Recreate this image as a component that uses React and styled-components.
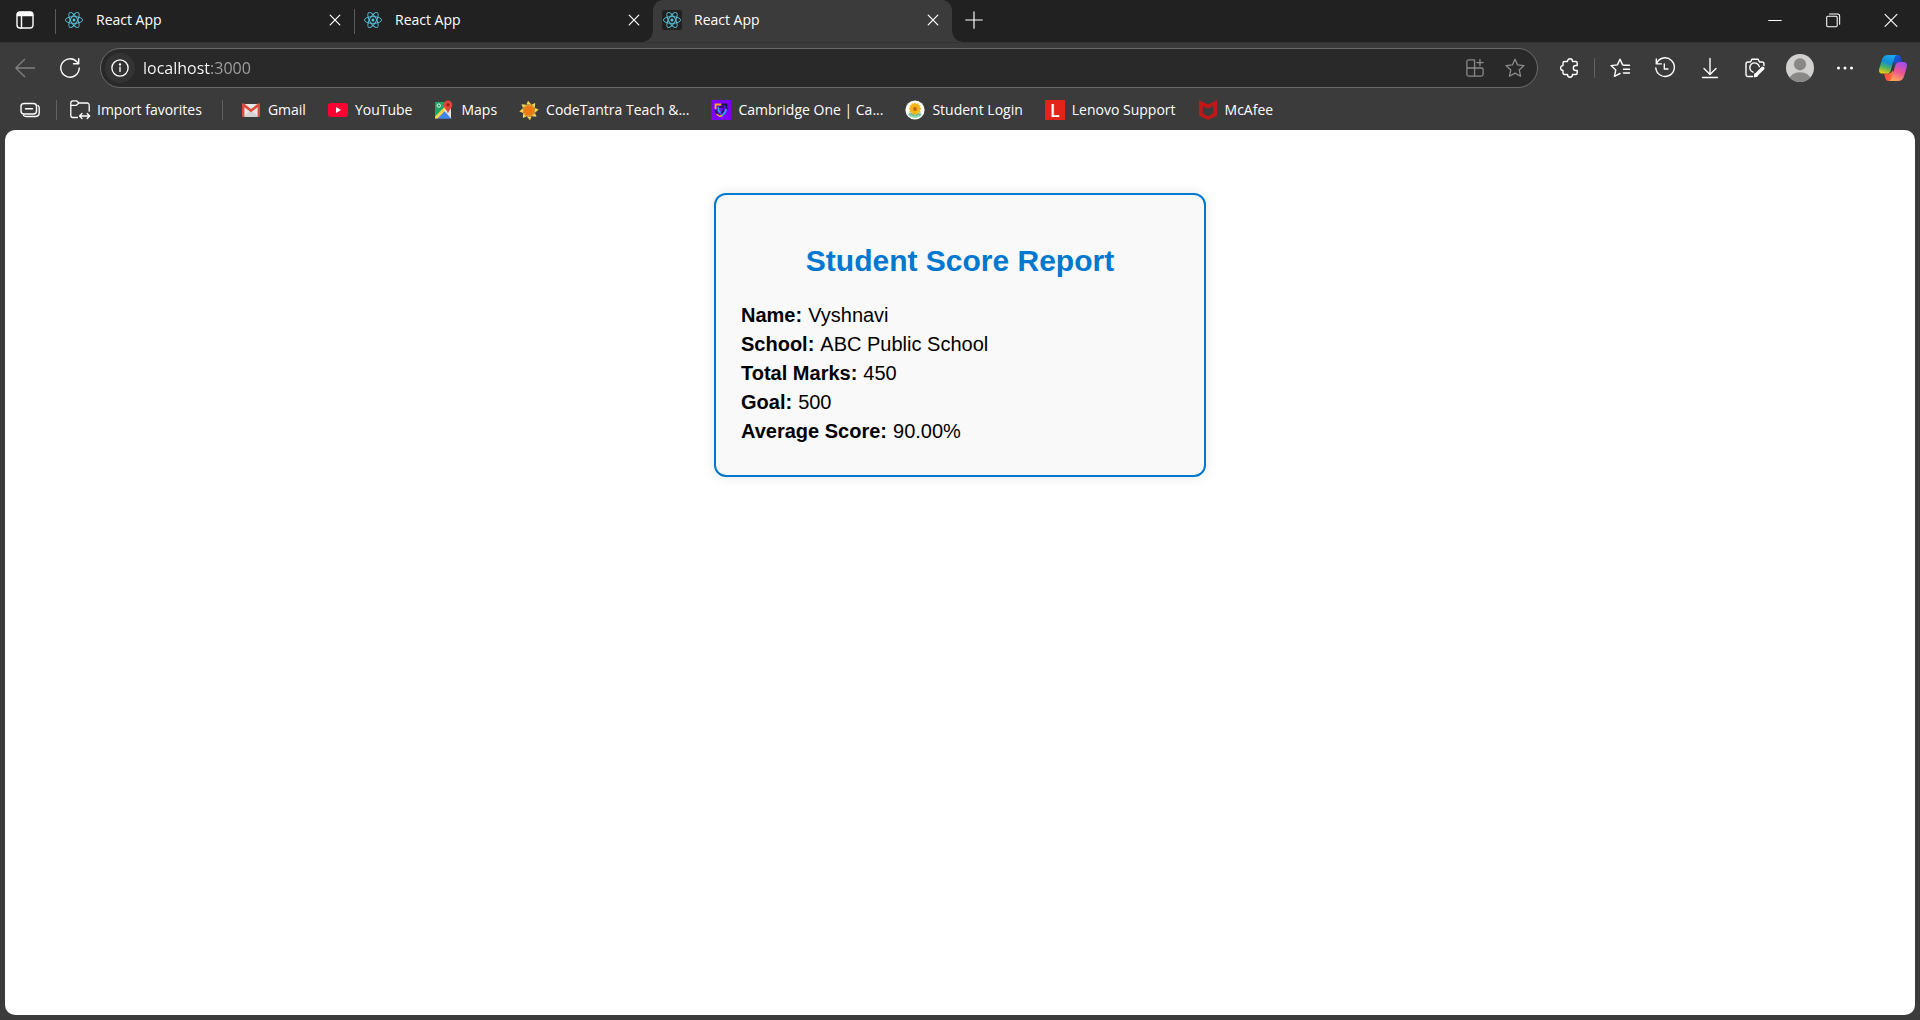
import React from "react";
import styled, { createGlobalStyle, css } from "styled-components";

const GlobalStyle = createGlobalStyle`
  *, *::before, *::after { box-sizing: border-box; }
  body { margin: 0; background: #3b3b3b; }
  button, input { font: inherit; color: inherit; }
`;

const uiFont = `"Open Sans", "Noto Sans", sans-serif`;

const Window = styled.div`
  display: flex;
  flex-direction: column;
  min-height: 100vh;
  background: #3b3b3b;
  color: #fff;
  font-family: ${uiFont};
  font-size: 14px;
  line-height: 20px;
`;

const bareButton = css`
  display: flex;
  align-items: center;
  justify-content: center;
  padding: 0;
  border: 0;
  background: none;
  color: inherit;
  flex: none;
`;

const Svg = styled.svg.attrs({ "aria-hidden": true })`
  display: block;
  flex: none;
  width: ${(p) => p.$size || 20}px;
  height: ${(p) => p.$size || 20}px;
  overflow: visible;
`;

function Line({ size, width = 1.3, children }) {
  return (
    <Svg $size={size} viewBox="0 0 20 20" fill="none" stroke="currentColor" strokeWidth={width} strokeLinecap="round" strokeLinejoin="round">
      {children}
    </Svg>
  );
}

/* ---------- Tab strip ---------- */

const TabStrip = styled.header`
  display: flex;
  height: 42px;
  background: #212121;
`;

const StripButton = styled.button`
  ${bareButton}
  width: ${(p) => p.$width}px;
  height: 40px;
`;

const TabList = styled.nav`
  display: flex;
  flex: 0 1 auto;
  margin-left: 5px;
`;

const Tab = styled.div`
  position: relative;
  display: flex;
  align-items: center;
  gap: 12px;
  width: 299px;
  height: 42px;
  padding: 0 8px 2px 9px;

  &::before {
    content: "";
    position: absolute;
    left: 0;
    top: 9px;
    width: 1px;
    height: 25px;
    background: #5c5c5c;
  }

  ${(p) =>
    p.$active &&
    css`
      background: #3b3b3b;
      border-radius: 10px 10px 0 0;

      &::before,
      &::after {
        content: "";
        position: absolute;
        top: auto;
        bottom: 0;
        width: 10px;
        height: 10px;
      }
      &::before {
        left: -10px;
        background: radial-gradient(circle at 0 0, transparent 9px, #3b3b3b 10px);
      }
      &::after {
        right: -10px;
        background: radial-gradient(circle at 100% 0, transparent 9px, #3b3b3b 10px);
      }
    `}
`;

const TabTitle = styled.span`
  flex: 1;
  overflow: hidden;
  white-space: nowrap;
  text-overflow: ellipsis;
`;

const TabClose = styled.button`
  ${bareButton}
  width: 22px;
  height: 22px;
`;

const Favicon = styled.span`
  display: flex;
  align-items: center;
  justify-content: center;
  width: 20px;
  height: 20px;
  border-radius: 2px;
  background: #212121;
`;

const WindowControls = styled.div`
  display: flex;
  margin-left: auto;
`;

function ReactLogo() {
  return (
    <Svg $size={20} viewBox="0 0 20 20" fill="none" stroke="#58c4dc" strokeWidth="0.9">
      {[0, 60, 120].map((angle) => (
        <ellipse key={angle} cx="10" cy="10" rx="8.6" ry="3.4" transform={`rotate(${angle} 10 10)`} />
      ))}
      <circle cx="10" cy="10" r="1.5" fill="#58c4dc" stroke="none" />
    </Svg>
  );
}

function CloseIcon({ size }) {
  return (
    <Line size={size} width={2}>
      <path d="M2 2 18 18M18 2 2 18" />
    </Line>
  );
}

function BrowserTab({ active }) {
  return (
    <Tab $active={active}>
      <Favicon><ReactLogo /></Favicon>
      <TabTitle>React App</TabTitle>
      <TabClose aria-label="Close tab"><CloseIcon size={12} /></TabClose>
    </Tab>
  );
}

/* ---------- Toolbar ---------- */

const Toolbar = styled.div`
  display: flex;
  align-items: center;
  gap: 1px;
  height: 52px;
  padding: 0 5px 0 3px;
  box-shadow: inset 0 1px #333;
`;

const ToolButton = styled.button`
  ${bareButton}
  width: 44px;
  height: 36px;
  color: ${(p) => (p.$dim ? "#818181" : "#fff")};
  margin-left: ${(p) => (p.$apart ? 3 : 0)}px;
`;

const ToolDivider = styled.span`
  width: 1px;
  height: 20px;
  margin: 0 2px 0 1px;
  background: #616161;
`;

const AddressBar = styled.div`
  display: flex;
  align-items: center;
  gap: 8px;
  flex: 1;
  min-width: 0;
  height: 40px;
  margin: 0 9px 0 7px;
  padding: 0 6px 0 4px;
  border: 1px solid #6b6b6b;
  border-radius: 20px;
  background: #292929;
`;

const SiteInfo = styled.button`
  ${bareButton}
  width: 30px;
  height: 30px;
  border-radius: 50%;
  background: #333;
`;

const AddressInput = styled.input`
  flex: 1;
  min-width: 0;
  height: 24px;
  padding: 0;
  border: 0;
  outline: 0;
  font-size: 16px;
  line-height: 24px;
  color: transparent;
  caret-color: #fff;
  background: linear-gradient(90deg, #fff 68px, #a3a3a3 68px);
  -webkit-background-clip: text;
  background-clip: text;
`;

const AddressAction = styled.button`
  ${bareButton}
  width: 32px;
  height: 30px;
  color: #8b8b8b;
`;

function Avatar() {
  return (
    <Svg $size={28} viewBox="0 0 28 28">
      <clipPath id="avatar-clip"><circle cx="14" cy="14" r="14" /></clipPath>
      <g clipPath="url(#avatar-clip)">
        <rect width="28" height="28" fill="#d2d0ce" />
        <circle cx="14" cy="10.3" r="6.1" fill="#8a8886" />
        <ellipse cx="14" cy="25.5" rx="10.5" ry="7.3" fill="#8a8886" />
      </g>
    </Svg>
  );
}

function CopilotLogo() {
  return (
    <Svg $size={28} viewBox="0 0 28 28">
      <defs>
        <linearGradient id="cp-left" x1="0.6" y1="0" x2="0.3" y2="1">
          <stop offset="0" stopColor="#1ba8ee" />
          <stop offset="0.4" stopColor="#0e8fd4" />
          <stop offset="0.7" stopColor="#55b45c" />
          <stop offset="1" stopColor="#f2cd12" />
        </linearGradient>
        <linearGradient id="cp-right" x1="0.7" y1="0" x2="0.3" y2="1">
          <stop offset="0" stopColor="#a34cf0" />
          <stop offset="0.5" stopColor="#ed5590" />
          <stop offset="1" stopColor="#ffab59" />
        </linearGradient>
        <linearGradient id="cp-top" x1="0" y1="0" x2="1" y2="1">
          <stop offset="0" stopColor="#1464dc" />
          <stop offset="1" stopColor="#1e3eb8" />
        </linearGradient>
        <linearGradient id="cp-bottom" x1="0" y1="0" x2="1" y2="0">
          <stop offset="0" stopColor="#f8443d" />
          <stop offset="1" stopColor="#ff7b3d" />
        </linearGradient>
      </defs>
      <path d="M14 1h4.600c2 0 2.900 1.100 3.500 3.200l1 3.800h-3.700c-2 0-3 .7-3.700 3L14 7z" fill="url(#cp-top)" />
      <path d="M14 27H9.600c-2 0-2.900-1.200-3.500-3.300L5 19.600h4.500c2 0 3-.7 3.700-3l2 3z" fill="url(#cp-bottom)" />
      <path d="M9 1h9c-1.500.3-2.200 1.500-2.800 3.500L12 15.500c-.9 3-2 4.100-4.500 4.100H3.400c-3 0-3.800-2.200-3.100-5.100L3 5.500C4 2.500 5.800 1 9 1z" fill="url(#cp-left)" />
      <path d="M19 27h-9c1.500-.3 2.300-1.500 2.800-3.500L16 12.300c.9-3 2-4.300 4.500-4.300h4c3 0 4 2.300 3.200 5.200L25 22.500C24 25.500 22.200 27 19 27z" fill="url(#cp-right)" />
    </Svg>
  );
}

const starPath = "M10 1.200 12.600 6.900 19 7.600 14.200 11.900 15.600 18.300 10 15.100 4.400 18.300 5.800 11.900 1 7.600 7.400 6.900Z";

/* ---------- Favorites bar ---------- */

const FavoritesBar = styled.nav`
  display: flex;
  align-items: center;
  height: 36px;
  padding: 0 8px 4px 20px;
`;

const BarButton = styled.button`
  ${bareButton}
  gap: 7px;
  white-space: nowrap;
`;

const BarDivider = styled.span`
  width: 1px;
  height: 20px;
  margin: 0 ${(p) => p.$after}px 0 ${(p) => p.$before}px;
  background: #616161;
`;

const FavoriteList = styled.div`
  display: flex;
  gap: 22px;
`;

const Favorite = styled.a`
  display: flex;
  align-items: center;
  gap: 7px;
  color: inherit;
  text-decoration: none;
  white-space: nowrap;
`;

const LenovoMark = styled.span`
  display: flex;
  align-items: center;
  justify-content: center;
  width: 20px;
  height: 20px;
  background: #e1251b;
  font: 600 18px/20px "Open Sans", sans-serif;
`;

function GmailIcon() {
  return (
    <Svg viewBox="0 0 20 20">
      <path d="M2 4h16v13H2z" fill="#e8e8e8" />
      <path d="M2 17 10 10l8 7z" fill="#d3d3d3" />
      <path d="M1 4.500C1 3.500 2 3 3 3.600L10 9l7-5.400c1-.6 2-.1 2 .9V17h-2.400V7.300L10 12.200 3.400 7.300V17H1z" fill="#dd4b3e" />
    </Svg>
  );
}

function YouTubeIcon() {
  return (
    <Svg viewBox="0 0 20 20">
      <rect y="3" width="20" height="14" rx="3" fill="#ff0033" />
      <path d="M8 7v6l5-3z" fill="#fff" />
    </Svg>
  );
}

function MapsIcon() {
  return (
    <Svg viewBox="0 0 20 20">
      <path d="M1 2h12v8L2 18.500H1z" fill="#22a464" />
      <path d="M2 18.500 10 10l8 8.500z" fill="#4285f4" />
      <path d="M1 16.500 11.500 6l2 2.500L3.500 18.500H1z" fill="#fbd34b" />
      <path d="M10 10.500 17 6v12.500z" fill="#e5e5e5" />
      <path d="M4.500 18.500 10 12.500l5.500 6z" fill="#4285f4" />
      <circle cx="4.800" cy="5.600" r="1.700" fill="none" stroke="#e8f5e9" strokeWidth="1" />
      <path d="M14 .5a4.300 4.300 0 0 1 4.300 4.300c0 3.200-3 4.700-4.300 8.700-1.300-4-4.300-5.500-4.300-8.700A4.300 4.300 0 0 1 14 .5z" fill="#e0443a" />
      <circle cx="14" cy="4.800" r="1.600" fill="#8c2119" />
    </Svg>
  );
}

function SunIcon() {
  return (
    <Svg viewBox="0 0 20 20">
      {[0, 45, 90, 135, 180, 225, 270, 315].map((a) => (
        <path key={a} d="M7.500 4.500 9 .8l3.500 3.900z" fill="#f4d35a" transform={`rotate(${a} 10 10.500)`} />
      ))}
      <circle cx="10" cy="10.500" r="6" fill="#e9b53a" />
      <circle cx="10" cy="10.500" r="5.300" fill="#ec7a14" />
    </Svg>
  );
}

function CambridgeIcon() {
  return (
    <Svg viewBox="0 0 20 20" fill="none">
      <rect width="20" height="20" fill="#8000ff" />
      <path d="M4.500 9V4.500H10" stroke="#ffb000" strokeWidth="1.800" />
      <path d="M11 4.500h4.500V10" stroke="#121a4a" strokeWidth="1.800" />
      <path d="M15 9c0 3.500-2 5.500-5 7" stroke="#17b4ea" strokeWidth="1.800" />
      <path d="M4.500 10c.3 2.600 2 4.800 5 6" stroke="#121a4a" strokeWidth="1.800" />
      <path d="M5.500 14 9 16.500l2-1" stroke="#ffb000" strokeWidth="1.500" />
      <path d="M7.500 7v3c0 1.200.8 2 2.500 3" stroke="#17b4ea" strokeWidth="1.600" />
      <path d="M8 7h4.500v3c0 1.200-.8 2-2.500 3" stroke="#121a4a" strokeWidth="1.500" />
    </Svg>
  );
}

function FlowerIcon() {
  return (
    <Svg viewBox="0 0 20 20">
      <circle cx="10" cy="10" r="9.600" fill="#fff" />
      <path d="M4.200 12.500h11.600l.8 2.700a9 9 0 0 1-13.200 0z" fill="#8ed4bb" />
      <path d="M5 15.500 7 13l1.500 2.500L10 13l1.500 2.500L13 13l2 2.500" fill="none" stroke="#35a584" strokeWidth=".8" />
      {[0, 30, 60, 90, 120, 150].map((a) => (
        <ellipse key={a} cx="10" cy="8.800" rx="6.300" ry="2.100" fill="#f5b51b" transform={`rotate(${a} 10 8.800)`} />
      ))}
      <circle cx="10" cy="9" r="1.900" fill="#b96a10" />
    </Svg>
  );
}

function McAfeeIcon() {
  return (
    <Svg viewBox="0 0 20 20">
      <path d="M1 .3 10 4.500 19 .3V15.500L10 20 1 15.500zM4.800 6v7.500L10 16.200l5.200-2.700V6L10 8.600z" fill="#c01818" fillRule="evenodd" />
    </Svg>
  );
}

const favorites = [
  ["Gmail", <GmailIcon />],
  ["YouTube", <YouTubeIcon />],
  ["Maps", <MapsIcon />],
  ["CodeTantra Teach &...", <SunIcon />],
  ["Cambridge One | Ca...", <CambridgeIcon />],
  ["Student Login", <FlowerIcon />],
  ["Lenovo Support", <LenovoMark aria-hidden="true">L</LenovoMark>],
  ["McAfee", <McAfeeIcon />],
];

/* ---------- Page ---------- */

const Page = styled.main`
  flex: 1;
  margin: 0 5px 5px;
  padding: 63px 16px 40px;
  border-radius: 10px;
  background: #fff;
`;

const ScoreCard = styled.section`
  max-width: 492px;
  margin: 0 auto;
  padding: 25px;
  border: 2px solid #0078d0;
  border-radius: 12px;
  background: #f9f9f9;
  box-shadow: 0 0 12px rgba(0, 0, 0, 0.1);
  color: #000;
  font-family: Arial, "Liberation Sans", sans-serif;
`;

const CardTitle = styled.h2`
  margin: 24px 0 23px;
  color: #0078d0;
  font-size: 30px;
  line-height: 34px;
  text-align: center;
`;

const Details = styled.dl`
  margin: 0 0 4px;
  font-size: 20px;
  line-height: 29px;
`;

const Detail = styled.div`
  display: flex;
  gap: 6px;

  dt { font-weight: 700; }
  dd { margin: 0; }
`;

const report = [
  ["Name", "Vyshnavi"],
  ["School", "ABC Public School"],
  ["Total Marks", "450"],
  ["Goal", "500"],
  ["Average Score", "90.00%"],
];

export default function App() {
  return (
    <Window>
      <GlobalStyle />
      <TabStrip>
        <StripButton $width={50} aria-label="Tab actions">
          <Line size={20} width={1.4}>
            <rect x="2" y="2" width="16" height="16" rx="3" />
            <path d="M2.500 5.500V4.500a2 2 0 0 1 2-2h11a2 2 0 0 1 2 2v1z" fill="currentColor" />
            <path d="M6.500 6v12" />
          </Line>
        </StripButton>
        <TabList aria-label="Open tabs">
          <BrowserTab />
          <BrowserTab />
          <BrowserTab active />
        </TabList>
        <StripButton $width={44} aria-label="New tab">
          <Line size={18} width={1.3}><path d="M10 .8v18.400M.8 10h18.400" /></Line>
        </StripButton>
        <WindowControls>
          <StripButton $width={58} aria-label="Minimize">
            <Line size={14} width={1.5}><path d="M1 10.700h18" /></Line>
          </StripButton>
          <StripButton $width={58} aria-label="Restore">
            <Line size={14} width={1.5}>
              <rect x="1" y="4.500" width="15" height="15" rx="1.500" />
              <path d="M5 1.500h11.500a3 3 0 0 1 3 3V16" />
            </Line>
          </StripButton>
          <StripButton $width={58} aria-label="Close">
            <Line size={14} width={1.6}><path d="M1.500 2 18.500 19M18.500 2 1.500 19" /></Line>
          </StripButton>
        </WindowControls>
      </TabStrip>

      <Toolbar>
        <ToolButton $dim aria-label="Back">
          <Line><path d="M19.500 10H.8M9.500 1.500.8 10l8.700 8.500" /></Line>
        </ToolButton>
        <ToolButton aria-label="Refresh">
          <Line width={1.4}><path d="M19.200 10A9.200 9.200 0 1 1 16.800 3.800L18.500 5.500M18.700.6v5.200h-5.200" /></Line>
        </ToolButton>
        <AddressBar>
          <SiteInfo aria-label="Site information">
            <Line size={18} width={1.5}>
              <circle cx="10" cy="10" r="9" />
              <path d="M10 9v5" />
              <circle cx="10" cy="6" r=".6" fill="currentColor" />
            </Line>
          </SiteInfo>
          <AddressInput aria-label="Address" defaultValue="localhost:3000" />
          <AddressAction aria-label="Install app">
            <Line size={18} width={1.4}>
              <path d="M3 1h6.500v18H3a2 2 0 0 1-2-2V3a2 2 0 0 1 2-2zM1 10h16.500a1.500 1.500 0 0 1 1.500 1.500V17a2 2 0 0 1-2 2H9.500M15.500.5v7M12 4h7" />
            </Line>
          </AddressAction>
          <AddressAction aria-label="Add to favorites">
            <Line><path d={starPath} /></Line>
          </AddressAction>
        </AddressBar>
        <ToolButton aria-label="Extensions">
          <Line width={1.4}>
            <path d="M4.500 3.500h3C7.500 2 8.300.8 10 .8s2.500 1.200 2.500 2.700h3.200c.8 0 1.500.7 1.500 1.500v2.500h-1.400a2.500 2.500 0 0 0 0 5h1.400v2.500c0 .8-.7 1.500-1.500 1.500h-3.200c0 1.500-.8 2.700-2.500 2.700s-2.500-1.200-2.500-2.700h-3C3.700 16.500 3 15.800 3 15v-2.600C1.500 12.400.6 11.400.6 10s.9-2.400 2.400-2.400V5c0-.8.7-1.500 1.500-1.500z" />
          </Line>
        </ToolButton>
        <ToolDivider />
        <ToolButton aria-label="Favorites">
          <Line width={1.4}>
            <path d="M15 7.300 12.600 6.900 10 1.200 7.400 6.900 1 7.600 5.800 11.900 4.400 18.300 10 15.500M13.500 7.300h6M13.500 11.200h6M13.500 15h6" />
          </Line>
        </ToolButton>
        <ToolButton aria-label="History">
          <Line width={1.4}>
            <path d="M1.500 5.500A9.300 9.300 0 1 1 .8 10M1.300.9v5h5M9.300 6v5h3.700" />
          </Line>
        </ToolButton>
        <ToolButton aria-label="Downloads">
          <Line width={1.4}><path d="M10 .5v15.500M4 10.500l6 6 6-6M2.500 19.500h15" /></Line>
        </ToolButton>
        <ToolButton aria-label="Screenshot">
          <Line width={1.4}>
            <path d="M7.500 18.500H3a2 2 0 0 1-2-2V6a2 2 0 0 1 2-2h2.500L7 1.200h6L14.500 4H17a2 2 0 0 1 2 2v1.500M8 14.200a4.800 4.800 0 1 1 6.300-5.500" />
            <path d="M17.800 10.200 11 17" strokeWidth="3.400" />
            <path d="M9.500 18.700 10 16l2 2z" fill="currentColor" />
          </Line>
        </ToolButton>
        <ToolButton aria-label="Profile"><Avatar /></ToolButton>
        <ToolButton aria-label="Settings and more">
          <Svg viewBox="0 0 20 20" fill="currentColor">
            <circle cx="3.500" cy="10" r="1.500" />
            <circle cx="10" cy="10" r="1.500" />
            <circle cx="16.500" cy="10" r="1.500" />
          </Svg>
        </ToolButton>
        <ToolButton $apart aria-label="Copilot"><CopilotLogo /></ToolButton>
      </Toolbar>

      <FavoritesBar aria-label="Favorites bar">
        <BarButton aria-label="Saved tab groups">
          <Line width={1.4}>
            <rect x="1" y="3.500" width="15.500" height="10.500" rx="3" />
            <path d="M5.500 8.800h7M18 5.500c.8.600 1.200 1.400 1.200 2.500v4.500c0 2.400-1.500 4-4 4H6.500c-1.500 0-2.500-.5-3-1.200" />
          </Line>
        </BarButton>
        <BarDivider $before={16} $after={13} />
        <BarButton>
          <Line width={1.3}>
            <path d="M7.500 17.500H3a2.200 2.200 0 0 1-2.200-2.200V3A2.200 2.200 0 0 1 3 .8h3.500L9 3h8a2.200 2.200 0 0 1 2.200 2.200v6M.8 5.300h5.500L9 3M9.800 16h9.700M12 13.500 9.500 16l2.500 2.500M17.200 13.500l2.500 2.500-2.500 2.500" />
          </Line>
          Import favorites
        </BarButton>
        <BarDivider $before={20} $after={18} />
        <FavoriteList>
          {favorites.map(([name, icon]) => (
            <Favorite key={name} href="#">
              {icon}
              {name}
            </Favorite>
          ))}
        </FavoriteList>
      </FavoritesBar>

      <Page>
        <ScoreCard>
          <CardTitle>Student Score Report</CardTitle>
          <Details>
            {report.map(([label, value]) => (
              <Detail key={label}>
                <dt>{label}:</dt>
                <dd>{value}</dd>
              </Detail>
            ))}
          </Details>
        </ScoreCard>
      </Page>
    </Window>
  );
}
